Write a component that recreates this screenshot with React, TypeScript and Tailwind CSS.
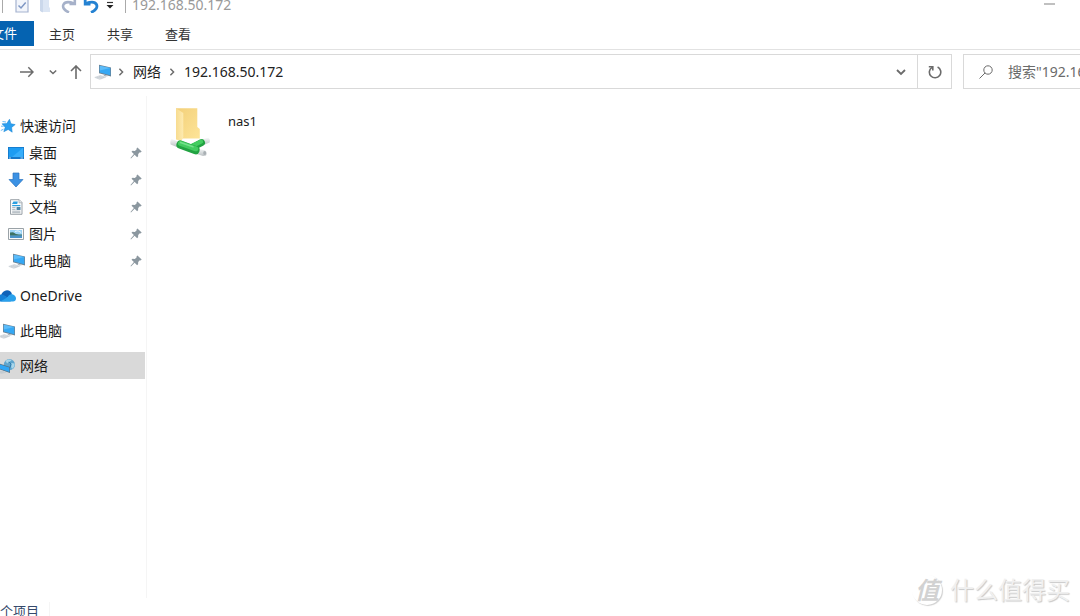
import React from "react";

type IconProps = { className?: string };

function ComputerIcon({ className = "w-[18px] h-4" }: IconProps) {
  return (
    <svg viewBox="0 0 18 16" className={className} aria-hidden="true">
      <path d="M5 .8 17 3.4V12.4L5 9.2Z" fill="#6b8294" />
      <path d="M5.8 1.7 16.3 4V11.2L5.8 8.5Z" fill="#35a8f4" />
      <path d="M5.8 1.7 16.3 4 5.8 6.6Z" fill="#5dbcf9" />
      <path d="M10 10.6 12 11.2 14.6 12.1 11.6 12.6 9.6 11.8Z" fill="#aab5be" />
      <path d="M.8 13.4 6.4 11.5 11.6 13.2 5.8 15.3Z" fill="#e1e5e8" stroke="#c3cad0" strokeWidth=".6" />
      <path d="M2.8 13.5 8.3 14.2M4.8 12.6 10 13.5" stroke="#b4bdc4" strokeWidth=".5" />
    </svg>
  );
}

function StarIcon() {
  return (
    <svg viewBox="0 0 16 16" className="w-4 h-4" aria-hidden="true">
      <path d="M9.5 1.2 10.9 5.7 15.2 6.6 11.6 9.4 12.2 14.2 8.2 11.5 3.8 13.7 5.2 9.2 2 5.8 6.7 5.6Z" fill="#2b9ff0" stroke="#1581d1" strokeWidth=".5" />
      <path d="M2.5 3.5 6 4M1 8.2H3.8M.8 12.5 3.5 11.2" stroke="#6cbdf5" strokeWidth="1" />
    </svg>
  );
}

function DesktopIcon() {
  return (
    <svg viewBox="0 0 16 16" className="w-4 h-4" aria-hidden="true">
      <path d="M0 2H16V14H0Z" fill="#1677c8" />
      <path d="M.8 2.8H15.2V12H.8Z" fill="#1d9cf2" />
      <path d="M15.2 2.8V12H4Z" fill="#38aefa" />
      <path d="M1 13H3M12.5 13H15" stroke="#cfe8fb" strokeWidth=".8" />
    </svg>
  );
}

function DownloadIcon() {
  return (
    <svg viewBox="0 0 16 16" className="w-4 h-4" aria-hidden="true">
      <path d="M5 1H11V7.5H15L8 15 1 7.5H5Z" fill="#3c92e4" stroke="#2b74be" strokeWidth=".7" />
    </svg>
  );
}

function DocumentIcon() {
  return (
    <svg viewBox="0 0 16 16" className="w-4 h-4" aria-hidden="true">
      <path d="M2.5.7H11.2L14 3.5V15.3H2.5Z" fill="#f9fafb" stroke="#8e979e" strokeWidth=".9" />
      <path d="M11 .8V3.8H14" fill="#e3e8eb" stroke="#8e979e" strokeWidth=".6" />
      <path d="M4 5 5.5 2.4H9.8L9.2 5Z" fill="#2a9fe0" />
      <path d="M4.2 6.6H12.3" stroke="#2a9fe0" strokeWidth="1.2" />
      <path d="M4.2 8.6H7.5M4.2 10.4H7.5M4.2 12.2H12.3M4.2 13.7H12.3" stroke="#8d9aa3" strokeWidth=".7" />
      <path d="M8.6 8H12.5V11H8.6Z" fill="#4c87a9" />
    </svg>
  );
}

function PictureIcon() {
  return (
    <svg viewBox="0 0 16 16" className="w-4 h-4" aria-hidden="true">
      <path d="M.5 2.5H15.5V13.5H.5Z" fill="#fafafa" stroke="#8f979d" strokeWidth=".9" />
      <path d="M2 4H14V12H2Z" fill="#9bd3f6" />
      <path d="M2 6.4 5 6.2 8 8 11 8.6 14 8.6V9.8H2Z" fill="#3d7262" />
      <path d="M2 9.6H14V12H2Z" fill="#4a93c9" />
      <path d="M7 5.5 10 4.8 13 6.4" stroke="#e9f6fd" strokeWidth="1" fill="none" />
    </svg>
  );
}

function OneDriveIcon() {
  return (
    <svg viewBox="0 0 18 16" className="w-[18px] h-4" aria-hidden="true">
      <path d="M3 7.6C4 4.4 6.2 2.3 9 2.3 11.5 2.3 13.4 3.8 14 6.2L10 9.6Z" fill="#0f62b8" />
      <path d="M0 13.6V7.6C2.6 6 5 6.3 7 7.7L13.6 12 12.6 13.6Z" fill="#157fd6" />
      <path d="M9.5 9.2C10.8 6.6 13 5.7 15 6.6 17 7.3 18 9 18 10.6 18 12.4 16.7 13.6 15 13.6H2.4Z" fill="#2aa1ec" />
    </svg>
  );
}

function NetworkIcon() {
  return (
    <svg viewBox="0 0 18 16" className="w-[18px] h-4" aria-hidden="true">
      <circle cx="11.4" cy="6.6" r="5.6" fill="#5fa5cd" />
      <path d="M7.5 3C9 1.3 12 1 13.7 2.1 12.8 4 10.2 3.6 9.2 5.5ZM13.2 5 16.6 5.4C16.8 7.6 15.7 9.8 14.2 10.8 12.2 9 14 7.2 13.2 5Z" fill="#a9d6ea" />
      <path d="M11 3.8 13 6 12 9.6" stroke="#2f7cae" strokeWidth="1" fill="none" />
      <path d="M1.4 5.6 12 9V15L1.4 11.2Z" fill="#547387" />
      <path d="M2 6.5 11.3 9.6V14L2 10.7Z" fill="#30a6f5" />
      <path d="M0 13.2 4.6 12.7 8.6 14.4 3.6 15.7 0 14.7Z" fill="#c4ccd2" />
    </svg>
  );
}

function PinIcon() {
  return (
    <svg viewBox="0 0 12 12" className="w-3 h-3" aria-hidden="true">
      <path d="M7.4.4 11.7 4.6 10.5 5.5 9.8 5.3 8.2 7 8.1 9.3 7.1 10.3 4.6 7.8 1 11.4.5 11 3.9 7.1 1.5 4.8 2.5 3.8 4.9 3.9 6.7 2.2 6.6 1.3Z" fill="#8b979f" />
    </svg>
  );
}

function NetworkFolderIcon() {
  return (
    <svg viewBox="0 0 42 50" className="w-[42px] h-[50px]" aria-hidden="true">
      <defs>
        <linearGradient id="folder" x1="0" y1="0" x2="1" y2="1">
          <stop offset="0" stopColor="#f3d07a" />
          <stop offset="1" stopColor="#fde498" />
        </linearGradient>
        <linearGradient id="flap" x1="0" y1="0" x2="1" y2="0">
          <stop offset="0" stopColor="#f8dc90" />
          <stop offset="1" stopColor="#fdeab0" />
        </linearGradient>
        <linearGradient id="tube" x1="0" y1="0" x2="0" y2="1">
          <stop offset="0" stopColor="#f6f8f8" />
          <stop offset="1" stopColor="#bcc2c5" />
        </linearGradient>
      </defs>
      <path d="M7 1.2H28.3V20L30.8 22V31.4H10Z" fill="url(#folder)" />
      <path d="M7 1.2 14.3 6V30L12.5 34 7 32.5Z" fill="url(#flap)" />
      <path d="M2.6 32 9 34.6 7.8 40 1.6 37.6Q.6 34 2.6 32Z" fill="url(#tube)" />
      <path d="M32 32.6 39.2 30.8Q41.8 32.6 40.6 35.4L34 38.2Z" fill="url(#tube)" />
      <path d="M28 41.4 36 43.2Q38.8 45.4 37 48.6L34 49 27 46.8Z" fill="url(#tube)" />
      <path d="M23 40.5 32.5 35.6" stroke="#22a342" strokeWidth="7" strokeLinecap="round" />
      <path d="M23 39 32 34.6" stroke="#43cc60" strokeWidth="4.2" strokeLinecap="round" />
      <path d="M11.5 37.6 26.5 43.2" stroke="#22a342" strokeWidth="8.2" strokeLinecap="round" />
      <path d="M11.5 36.4 26.8 41.8" stroke="#43cc60" strokeWidth="5" strokeLinecap="round" />
      <path d="M11.5 35.4 24 39.8" stroke="#74e18b" strokeWidth="1.6" strokeLinecap="round" />
      <ellipse cx="35.7" cy="45.9" rx="1.5" ry="2" fill="#a9b0b4" />
    </svg>
  );
}

function Chevron({ className }: IconProps) {
  return (
    <svg viewBox="0 0 10 10" className={className} fill="none" stroke="currentColor" strokeWidth="1.8" aria-hidden="true">
      <path d="M1 3 5 7 9 3" />
    </svg>
  );
}

const quickItems = [
  { label: "桌面", icon: <DesktopIcon /> },
  { label: "下载", icon: <DownloadIcon /> },
  { label: "文档", icon: <DocumentIcon /> },
  { label: "图片", icon: <PictureIcon /> },
  { label: "此电脑", icon: <ComputerIcon /> },
];

const roots = [
  { label: "OneDrive", icon: <OneDriveIcon />, selected: false },
  { label: "此电脑", icon: <ComputerIcon />, selected: false },
  { label: "网络", icon: <NetworkIcon />, selected: true },
];

function TitleBar() {
  return (
    <header className="flex h-[21px] shrink-0 items-center pb-[11px] pr-6 text-[#999]">
      <span className="ml-0.5 h-4 w-px bg-[#aaa]" />
      <button aria-label="属性" className="ml-3">
        <svg viewBox="0 0 14 16" className="h-4 w-3.5" fill="none">
          <path d="M1 1H13V15H1Z" fill="#f2f5fb" stroke="#a5b3d0" strokeWidth="1.2" />
          <path d="M3.5 8.5 6 11 10.7 5.5" stroke="#7e97c4" strokeWidth="1.5" />
        </svg>
      </button>
      <button aria-label="新建文件夹" className="ml-2.5">
        <svg viewBox="0 0 12 16" className="h-4 w-3">
          <path d="M2 0H10V10L11 11V15H2Z" fill="#dce6f4" />
          <path d="M1 0 4 3V15.5L1 14Z" fill="#cbd8eb" />
        </svg>
      </button>
      <button aria-label="恢复" className="ml-2.5">
        <svg viewBox="0 0 16 16" className="h-4 w-4" fill="none" stroke="#a6b1c9" strokeWidth="2.6">
          <path d="M8 15.5C3.6 13.5 1 10.5 2.5 7.5 4 4.5 8.5 4.8 13 6.4" />
          <path d="M13.8 1V7H8.5" />
        </svg>
      </button>
      <button aria-label="撤消" className="ml-1.5">
        <svg viewBox="0 0 16 16" className="h-4 w-4" fill="none" stroke="#2582d2" strokeWidth="2.8">
          <path d="M8 15.5C12.4 13.5 15 10.5 13.5 7.5 12 4.5 7.5 4.8 3 6.4" />
          <path d="M2.2 1V7H7.5" />
        </svg>
      </button>
      <button aria-label="自定义快速访问工具栏" className="ml-[7px]">
        <svg viewBox="0 0 8 8" className="h-2 w-2">
          <path d="M1 1.5H7" stroke="#333" strokeWidth="1.2" />
          <path d="M.5 4H7.5L4 7.5Z" fill="#222" />
        </svg>
      </button>
      <span className="ml-[11px] h-4 w-px bg-[#aaa]" />
      <h1 className="ml-1.5 text-sm leading-[10px]">192.168.50.172</h1>
      <button aria-label="最小化" className="ml-auto">
        <svg viewBox="0 0 12 12" className="h-3 w-3">
          <path d="M0 4H11V6H0Z" fill="#c0c0c0" />
        </svg>
      </button>
    </header>
  );
}

function Ribbon() {
  return (
    <nav className="flex h-[29px] shrink-0 items-start border-b border-[#e2e2e2] text-[13px] text-[#333]">
      <button className="flex h-[25px] w-[34px] items-center justify-end overflow-hidden whitespace-nowrap bg-[#0563b1] pr-[17px] text-white">
        文件
      </button>
      <div className="flex h-[27px] items-center gap-8 pl-[15px]">
        <button>主页</button>
        <button>共享</button>
        <button>查看</button>
      </div>
    </nav>
  );
}

function AddressRow() {
  return (
    <div className="flex h-[46px] shrink-0 items-start pt-1 text-sm text-[#6b6b6b]">
      <div className="flex h-[35px] w-[90px] shrink-0 items-center pl-5">
        <button aria-label="前进">
          <svg viewBox="0 0 14 14" className="h-3.5 w-3.5" fill="none" stroke="currentColor" strokeWidth="1.5">
            <path d="M0 7H13M8.3 2.3 13 7 8.3 11.7" />
          </svg>
        </button>
        <button aria-label="最近位置" className="ml-[15px]">
          <Chevron className="h-2 w-2" />
        </button>
        <button aria-label="上移" className="ml-3">
          <svg viewBox="0 0 14 14" className="h-3.5 w-3.5" fill="none" stroke="currentColor" strokeWidth="1.6">
            <path d="M7 14V1M2 6 7 1 12 6" />
          </svg>
        </button>
      </div>
      <div className="flex h-[35px] min-w-0 flex-1 items-center border border-[#d9d9d9]">
        <ComputerIcon className="ml-[3px] h-4 w-[18px] shrink-0" />
        <Chevron className="ml-[5px] h-2 w-2 shrink-0 -rotate-90" />
        <button className="ml-2 text-[#222]">网络</button>
        <Chevron className="ml-[7px] h-2 w-2 shrink-0 -rotate-90" />
        <button className="ml-2 text-[#222]">192.168.50.172</button>
        <button aria-label="历史记录" className="ml-auto mr-[11px]">
          <Chevron className="h-2.5 w-2.5" />
        </button>
        <button aria-label="刷新" className="flex h-full w-[34px] items-center justify-center border-l border-[#d9d9d9]">
          <svg viewBox="0 0 14 14" className="h-3.5 w-3.5" fill="none" stroke="currentColor" strokeWidth="1.6">
            <path d="M9.6 2A5.7 5.7 0 1 1 4 2.3" />
            <path d="M.8 1.8H4.8V5.6" />
          </svg>
        </button>
      </div>
      <label className="ml-[11px] flex h-[35px] w-[117px] shrink-0 items-center border border-r-0 border-[#d9d9d9]">
        <svg viewBox="0 0 14 14" className="ml-[15px] h-3.5 w-3.5 shrink-0" fill="none" stroke="currentColor" strokeWidth="1">
          <circle cx="9" cy="5" r="4.2" />
          <path d="M6 8 .5 13.5" />
        </svg>
        <input
          type="text"
          aria-label="搜索"
          placeholder={'搜索"192.168.50.172"'}
          className="ml-[15px] w-full min-w-0 bg-transparent outline-none placeholder:text-[#6b6b6b]"
        />
      </label>
    </div>
  );
}

function Sidebar() {
  return (
    <aside className="w-[147px] shrink-0 border-r border-[#f5f5f5] pt-4 text-sm">
      <a href="#quick" className="flex h-[27px] items-center gap-1">
        <StarIcon />
        快速访问
      </a>
      <ul>
        {quickItems.map((item) => (
          <li key={item.label}>
            <a href="#quick" className="flex h-[27px] items-center pl-2 pr-1">
              <span className="flex w-[21px] shrink-0">{item.icon}</span>
              <span className="flex-1">{item.label}</span>
              <PinIcon />
            </a>
          </li>
        ))}
      </ul>
      <ul className="mt-2 flex flex-col gap-2">
        {roots.map((item) => (
          <li key={item.label}>
            <a href="#root" className={`mr-px flex h-[27px] items-center ${item.selected ? "bg-[#d9d9d9]" : ""}`}>
              <span className="-ml-0.5 flex w-[22px] shrink-0">{item.icon}</span>
              {item.label}
            </a>
          </li>
        ))}
      </ul>
    </aside>
  );
}

function Watermark() {
  return (
    <div className="absolute bottom-2.5 right-2.5 flex items-center gap-2 text-2xl leading-8 text-[#f0f0f0] [text-shadow:1px_1px_1px_#c8c8c8]">
      <span className="flex h-[30px] w-[30px] items-center justify-center rounded-full shadow-[1px_1px_1px_#d0d0d0]">
        <span className="font-bold italic text-[#d2d2d2] [text-shadow:none]">值</span>
      </span>
      <span>什么值得买</span>
    </div>
  );
}

export default function App() {
  return (
    <div className="relative flex h-screen flex-col overflow-hidden bg-white font-['Noto_Sans','Noto_Sans_CJK_SC',sans-serif] text-[#1a1a1a]">
      <TitleBar />
      <Ribbon />
      <AddressRow />
      <div className="flex min-h-0 flex-1">
        <Sidebar />
        <main className="flex-1 pl-[22px] pt-[11px]">
          <button className="flex items-start gap-[17px] text-left text-[13px] leading-7">
            <NetworkFolderIcon />
            nas1
          </button>
        </main>
      </div>
      <footer className="flex h-[18px] shrink-0 items-start pt-1 text-[13px] leading-[18px] text-[#35496b]">
        <span className="w-[50px] border-r border-[#f5f5f5]">个项目</span>
      </footer>
      <Watermark />
    </div>
  );
}
